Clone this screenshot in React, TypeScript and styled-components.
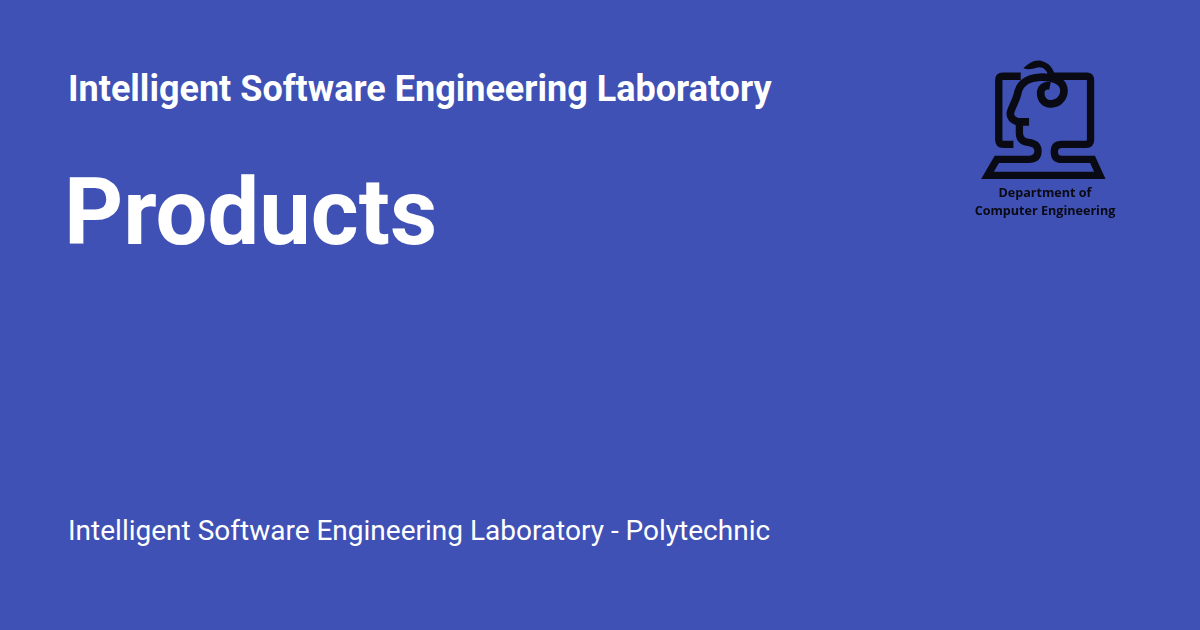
import React from "react";
import styled, { createGlobalStyle } from "styled-components";

const Global = createGlobalStyle`
  html, body { margin: 0; padding: 0; }
  body { background: #3f51b5; }
`;

const Card = styled.main`
  box-sizing: border-box;
  width: 1200px;
  height: 630px;
  padding: 68px 68px 0 68px;
  background: #3f51b5;
  color: #fff;
  font-family: Roboto, "Liberation Sans", sans-serif;
  display: grid;
  grid-template-columns: 1fr auto;
  grid-template-rows: auto auto 1fr;
`;

const Site = styled.div`
  font-size: 36px;
  line-height: 43px;
  font-weight: 700;
`;

const Title = styled.h1`
  margin: 48px 0 0 -4px;
  font-size: 92px;
  line-height: 108px;
  font-weight: 700;
  grid-column: 1;
`;

const Description = styled.div`
  grid-column: 1 / span 2;
  align-self: end;
  margin-bottom: 83px;
  font-size: 28px;
  line-height: 33px;
`;

const LogoSlot = styled.div`
  grid-column: 2;
  grid-row: 1 / span 2;
  width: 170px;
  margin: -18px 2px 0 0;
  display: flex;
  flex-direction: column;
  align-items: center;
  color: #0a0a14;
  filter: blur(0.4px);
`;

const LogoCaption = styled.div`
  margin-top: 1px;
  font-family: "Open Sans", sans-serif;
  font-size: 12.6px;
  line-height: 18px;
  font-weight: 700;
  text-align: center;
`;

const Logo = () => (
  <svg width="170" height="133" viewBox="0 0 510 400" fill="none" stroke="#0a0a14" strokeWidth="22">
    <path d="M182 79H128Q116 79 116 91V270Q116 284 130 284H160" />
    <path d="M262 79H380Q392 79 392 91V270Q392 284 378 284H305Q283 284 283 306Q283 329 305 329H398L420 377H82L110 329H205Q234 329 234 303Q234 282 205 278Q178 274 178 250V216" />
    <path strokeWidth="23" d="M207 216H172Q148 206 151 188C156 168 170 150 174 125C182 98 207 84 240 82C275 80 306 92 311 114C316 138 300 160 275 162C256 164 242 150 242 130C242 116 252 104 270 108" />
    <path fill="#0a0a14" stroke="none" d="M190 55C205 40 225 28 245 33C268 40 282 55 286 84L266 80C262 62 250 52 238 52C222 54 208 62 190 55Z" />
  </svg>
);

export default function App() {
  return (
    <Card>
      <Global />
      <Site>Intelligent Software Engineering Laboratory</Site>
      <LogoSlot>
        <Logo />
        <LogoCaption>Department of<br />Computer Engineering</LogoCaption>
      </LogoSlot>
      <Title>Products</Title>
      <Description>Intelligent Software Engineering Laboratory - Polytechnic</Description>
    </Card>
  );
}
